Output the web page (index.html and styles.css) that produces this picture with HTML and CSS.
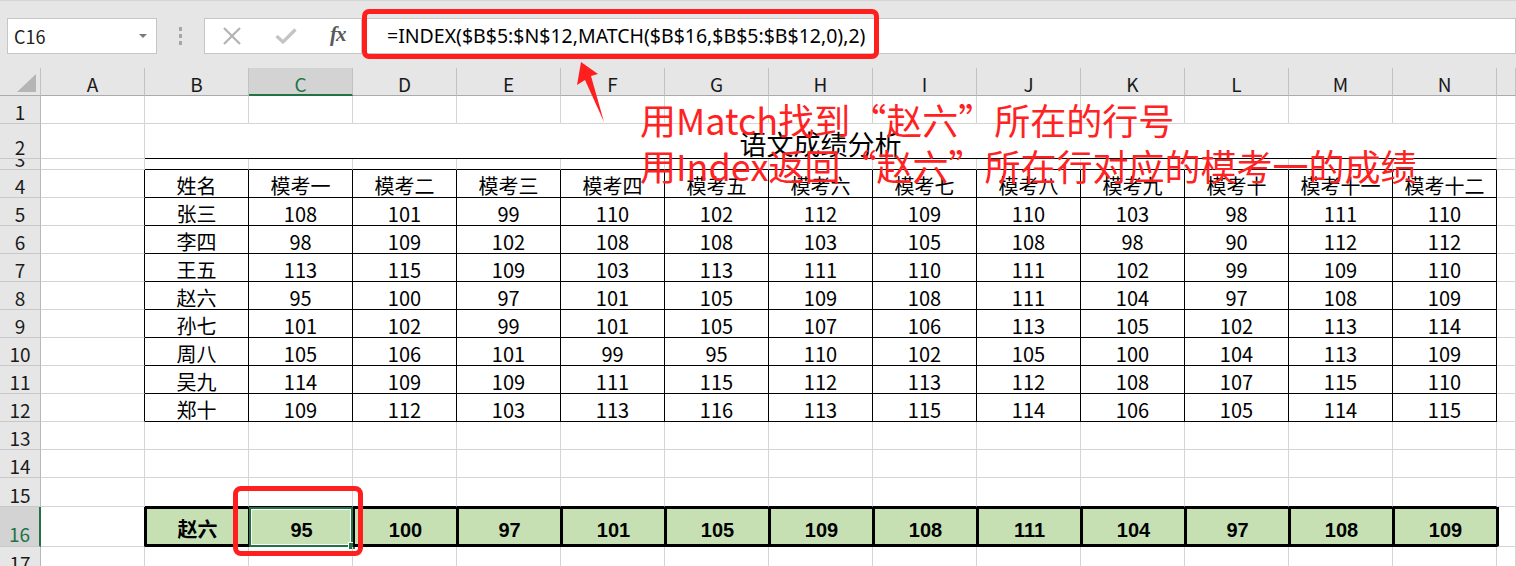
FILE: index.html
```html
<!DOCTYPE html>
<html lang="zh-CN">
<head>
    <meta charset="UTF-8">
    <meta name="viewport" content="width=device-width, initial-scale=1.0">
    <title>语文成绩分析</title>
    <link rel="stylesheet" href="styles.css">
</head>
<body>
    <div class="toolbar">
        <div class="namebox"><span>C16</span><i class="caret"></i></div>
        <div class="grip"><i></i><i></i><i></i></div>
        <div class="fbuttons">
            <svg class="btn-x" width="20" height="18" viewBox="0 0 20 18">
                <path d="M2 1 L18 17 M18 1 L2 17" stroke="#b3b3b3" stroke-width="2.2" fill="none"/>
            </svg>
            <svg class="btn-ok" width="22" height="16" viewBox="0 0 22 16">
                <path d="M1.5 8 L8 14 L20.5 1.5" stroke="#c4c4c4" stroke-width="3.2" fill="none"/>
            </svg>
            <span class="fx">fx</span>
        </div>
        <div class="formula">=INDEX($B$5:$N$12,MATCH($B$16,$B$5:$B$12,0),2)</div>
    </div>

    <div id="sheet" class="sheet">
        <!-- le celle vengono create dallo script -->
    </div>

    <div class="mark mark-formula"></div>
    <div class="mark mark-cell"></div>
    <svg class="arrow" width="40" height="70" viewBox="570 58 40 70">
        <polygon points="581,62 598,74 591,76 604,122 585,80 577,85" fill="#ff1f1f"/>
    </svg>
    <div class="note">
        <p>用Match找到“赵六”所在的行号</p>
        <p>用Index返回“赵六”所在行对应的模考一的成绩</p>
    </div>

    <script>
        const cols = ['A','B','C','D','E','F','G','H','I','J','K','L','M','N'];
        const heads = ['姓名','模考一','模考二','模考三','模考四','模考五','模考六','模考七','模考八','模考九','模考十','模考十一','模考十二'];
        const rows = [
            ['张三', 108, 101, 99, 110, 102, 112, 109, 110, 103, 98, 111, 110],
            ['李四', 98, 109, 102, 108, 108, 103, 105, 108, 98, 90, 112, 112],
            ['王五', 113, 115, 109, 103, 113, 111, 110, 111, 102, 99, 109, 110],
            ['赵六', 95, 100, 97, 101, 105, 109, 108, 111, 104, 97, 108, 109],
            ['孙七', 101, 102, 99, 101, 105, 107, 106, 113, 105, 102, 113, 114],
            ['周八', 105, 106, 101, 99, 95, 110, 102, 105, 100, 104, 113, 109],
            ['吴九', 114, 109, 109, 111, 115, 112, 113, 112, 108, 107, 115, 110],
            ['郑十', 109, 112, 103, 113, 116, 113, 115, 114, 106, 105, 114, 115],
        ];
        const total = rows[3];
        const sheet = document.getElementById('sheet');

        function cell(cls, text) {
            const el = document.createElement('div');
            el.className = 'cell ' + cls;
            if (text !== undefined) el.textContent = text;
            sheet.appendChild(el);
            return el;
        }

        // intestazioni di colonna
        cell('corner');
        cols.forEach(c => cell('hdr col-hdr' + (c === 'C' ? ' active' : ''), c));
        cell('hdr col-hdr');

        for (let r = 1; r <= 17; r++) {
            cell('hdr row-hdr' + (r === 16 ? ' active' : '') + (r === 3 ? ' short' : ''), r);
            if (r === 2) {
                cell('');
                cell('title', '语文成绩分析');
                cell('');
                continue;
            }
            for (let c = 0; c < 14; c++) {
                let cls = '';
                let text;
                if (r >= 4 && r <= 12) {
                    if (c === 0) cls = 'edge';
                    else {
                        cls = 'tbl';
                        text = r === 4 ? heads[c - 1] : rows[r - 5][c - 1];
                    }
                } else if (r === 3 && c > 0) {
                    cls = 'above';
                } else if (r === 15 && c > 0) {
                    cls = 'above';
                } else if (r === 16) {
                    if (c === 0) cls = 'edge';
                    else {
                        cls = 'total';
                        text = total[c - 1];
                    }
                }
                const el = cell(cls, text);
                if (r === 16 && c === 2) {
                    const sel = document.createElement('div');
                    sel.className = 'selection';
                    sel.innerHTML = '<i class="handle"></i>';
                    el.appendChild(sel);
                }
            }
            cell(r === 16 ? 'after' : '');
        }
    </script>
</body>
</html>
```

FILE: styles.css
```css
body {
    margin: 0;
    width: 1516px;
    height: 566px;
    overflow: hidden;
    position: relative;
    background: #fff;
    font-family: "Noto Sans CJK SC", "Noto Sans", sans-serif;
    color: #000;
}
.toolbar {
    height: 68px;
    box-sizing: border-box;
    padding-top: 17px;
    background: #e6e6e6;
    border-top: 1px solid #d6d6d6;
    display: flex;
    align-items: flex-start;
}
.namebox {
    margin-left: 7px;
    width: 150px;
    height: 36px;
    box-sizing: border-box;
    background: #fff;
    border: 1px solid #c6c6c6;
    display: flex;
    align-items: center;
    justify-content: space-between;
    padding: 0 9px 0 6px;
    font-size: 18px;
    color: #222;
}
.caret {
    width: 0;
    height: 0;
    border-left: 4px solid transparent;
    border-right: 4px solid transparent;
    border-top: 4px solid #7a7a7a;
}
.grip {
    width: 47px;
    height: 36px;
    display: flex;
    flex-direction: column;
    align-items: center;
    justify-content: center;
    gap: 3px;
}
.grip i {
    display: block;
    width: 3px;
    height: 4px;
    background: #a6a6a6;
}
.fbuttons {
    width: 158px;
    height: 36px;
    box-sizing: border-box;
    background: #fff;
    border: 1px solid #c6c6c6;
    display: flex;
    align-items: center;
    padding-left: 17px;
}
.btn-x {
    margin-right: 33px;
}
.btn-ok {
    margin-right: 33px;
}
.fx {
    font-family: "Liberation Serif", serif;
    font-style: italic;
    font-weight: bold;
    font-size: 21px;
    color: #595959;
    letter-spacing: -1px;
    margin-top: -3px;
}
.formula {
    flex: 1;
    height: 36px;
    box-sizing: border-box;
    background: #fff;
    border: 1px solid #c6c6c6;
    border-left: none;
    padding-left: 25px;
    font-family: "Noto Sans", sans-serif;
    font-size: 19.5px;
    line-height: 34px;
    white-space: nowrap;
}
.sheet {
    display: grid;
    grid-template-columns: 41px repeat(14, 104px) 19px;
    grid-template-rows: 28px 28px 35px 11px repeat(9, 28px) 28px 28px 29px 40px 28px;
}
.cell {
    box-sizing: border-box;
    border-right: 1px solid #d4d4d4;
    border-bottom: 1px solid #d4d4d4;
    display: flex;
    align-items: flex-end;
    justify-content: center;
    white-space: nowrap;
    font-size: 20px;
    line-height: 20px;
    padding-bottom: 1px;
    position: relative;
}
.hdr {
    background: #e6e6e6;
    border-right-color: #c2c2c2;
    border-bottom-color: #c8c8c8;
    font-size: 19px;
    color: #1a1a1a;
}
.col-hdr {
    border-bottom-color: #ababab;
    padding-bottom: 1px;
}
.row-hdr {
    border-right-color: #b8b8b8;
}
.row-hdr.short {
    padding-bottom: 0;
    align-items: flex-start;
    line-height: 0;
    overflow: hidden;
}
.hdr.active {
    background: #d3d3d3;
    color: #217346;
}
.col-hdr.active {
    border-bottom: 2px solid #217346;
    padding-bottom: 0;
}
.row-hdr.active {
    border-right: 2px solid #217346;
    padding-bottom: 2px;
}
.corner {
    background: #e6e6e6;
    border-right-color: #c2c2c2;
    border-bottom-color: #ababab;
}
.corner::after {
    content: "";
    position: absolute;
    right: 4px;
    bottom: 3px;
    width: 0;
    height: 0;
    border-left: 19px solid transparent;
    border-bottom: 18px solid #b5b5b5;
}
.title {
    grid-column: span 13;
    border-bottom-color: #000;
    font-size: 27px;
    line-height: 27px;
    padding-bottom: 1px;
}
.above {
    border-bottom-color: #000;
}
.edge {
    border-right-color: #000;
}
.tbl {
    border-right-color: #000;
    border-bottom-color: #000;
}
.total {
    background: #c6e0b4;
    border-top: 2px solid #000;
    border-left: 2px solid #000;
    border-right-color: #000;
    border-bottom: 3px solid #000;
    font-family: "Liberation Sans", "Noto Sans CJK SC", sans-serif;
    font-weight: bold;
    padding-bottom: 4px;
}
.after {
    border-left: 2px solid #000;
}
.selection {
    position: absolute;
    left: -2px;
    top: -2px;
    right: -1px;
    bottom: -3px;
    border: 2px solid #217346;
    box-shadow: inset 0 0 0 1px #fff;
}
.handle {
    position: absolute;
    right: -5px;
    bottom: -5px;
    width: 6px;
    height: 6px;
    background: #217346;
    border: 1px solid #fff;
}
.mark {
    position: absolute;
    border: 5px solid #ff1f1f;
    border-radius: 7px;
    box-sizing: border-box;
}
.mark-formula {
    left: 362px;
    top: 9px;
    width: 517px;
    height: 50px;
}
.mark-cell {
    left: 233px;
    top: 486px;
    width: 130px;
    height: 70px;
    border-radius: 8px;
}
.arrow {
    position: absolute;
    left: 570px;
    top: 58px;
}
.note {
    position: absolute;
    left: 640px;
    top: 96px;
    color: #ff2222;
    font-size: 36px;
    line-height: 46px;
    white-space: nowrap;
}
.note p {
    margin: 0;
}
```
